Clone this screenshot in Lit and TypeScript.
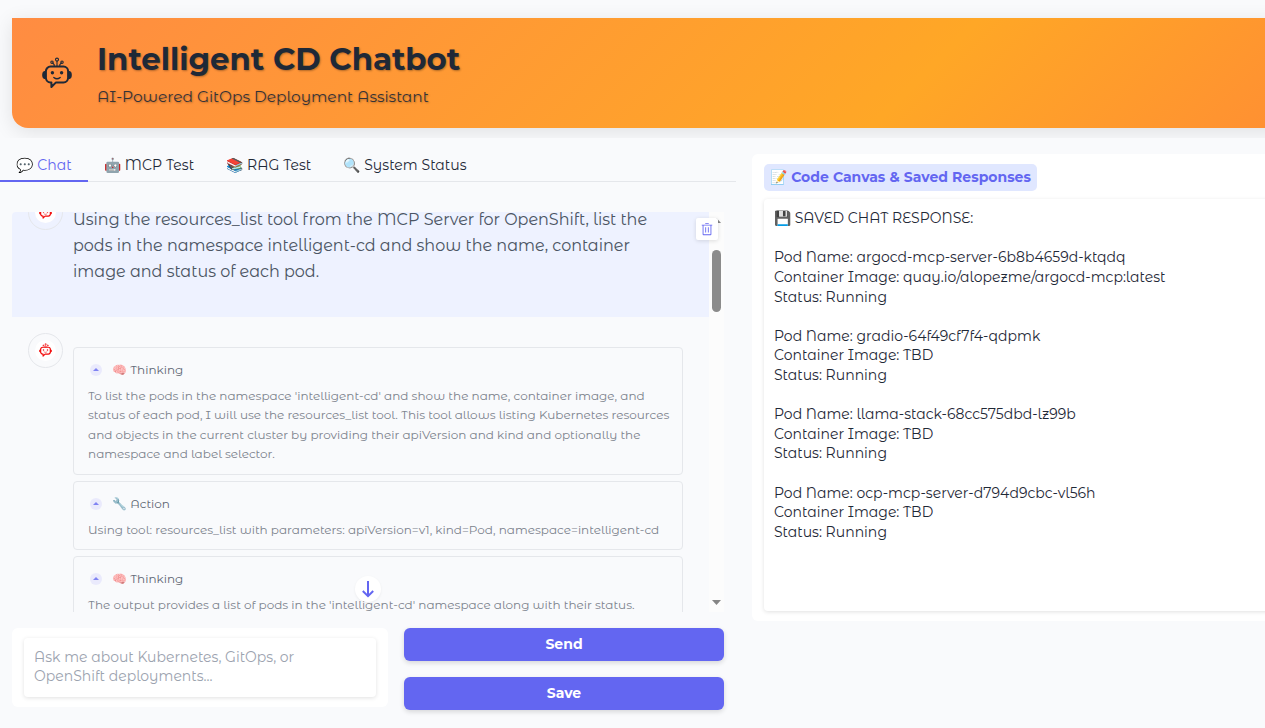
import { LitElement, html, css, svg } from "lit";
import { customElement } from "lit/decorators.js";

const robot = (cls: string) => html`
  <svg class=${cls} viewBox="0 0 30 32" fill="none" stroke="currentColor"
    stroke-linecap="round" stroke-linejoin="round">
    ${svg`
      <path d="M8.500 9.600h13a4.600 4.600 0 0 1 4.600 4.600v6.600a4.600 4.600 0 0 1-4.600 4.600h-7.500l-4.600 4.600v-4.600h-.900a4.600 4.600 0 0 1-4.600-4.600v-6.600a4.600 4.600 0 0 1 4.600-4.600z"/>
      <path d="M15 9.400V4.200M12.200 9.400V7.600L10.600 6M17.800 9.400V7.600L19.400 6" stroke-width="1.100"/>
      <circle cx="15" cy="2.600" r="1.500" stroke-width="1.100"/>
      <circle cx="10" cy="5.200" r="1.200" stroke-width="1.100"/>
      <circle cx="20" cy="5.200" r="1.200" stroke-width="1.100"/>
      <path d="M2.600 14.800C.300 15.400.300 20.800 2.600 21.400zM27.400 14.800c2.300.600 2.300 6 0 6.600z" fill="currentColor" stroke-width="1.400"/>
      <circle cx="10.400" cy="15.800" r="1.700" fill="currentColor" stroke="none"/>
      <circle cx="19.600" cy="15.800" r="1.700" fill="currentColor" stroke="none"/>
      <path d="M11.800 20.400c1.800 1.500 4.600 1.500 6.400 0" stroke-width="1.300"/>`}
  </svg>`;

const TABS = ["💬 Chat", "🤖 MCP Test", "📚 RAG Test", "🔍 System Status"];

const STEPS = [
  {
    title: "🧠 Thinking",
    body: "To list the pods in the namespace 'intelligent-cd' and show the name, container image, and status of each pod, I will use the resources_list tool. This tool allows listing Kubernetes resources and objects in the current cluster by providing their apiVersion and kind and optionally the namespace and label selector.",
  },
  {
    title: "🔧 Action",
    body: "Using tool: resources_list with parameters: apiVersion=v1, kind=Pod, namespace=intelligent-cd",
  },
  {
    title: "🧠 Thinking",
    body: "The output provides a list of pods in the 'intelligent-cd' namespace along with their status.",
  },
];

const SAVED = `💾 SAVED CHAT RESPONSE:

Pod Name: argocd-mcp-server-6b8b4659d-ktqdq
Container Image: quay.io/alopezme/argocd-mcp:latest
Status: Running

Pod Name: gradio-64f49cf7f4-qdpmk
Container Image: TBD
Status: Running

Pod Name: llama-stack-68cc575dbd-lz99b
Container Image: TBD
Status: Running

Pod Name: ocp-mcp-server-d794d9cbc-vl56h
Container Image: TBD
Status: Running`;

@customElement("app-root")
class AppRoot extends LitElement {
  static styles = css`
    :host {
      display: block; height: 728px; overflow: hidden; background: #f9fafc; color: #1f2937;
      font-family: "Montserrat Alternates", Montserrat, Inter, sans-serif; font-size: 14px;
    }
    * { box-sizing: border-box; }
    .top { padding: 18px 0 10px 12px; overflow: hidden; height: 138px; }
    .hero {
      display: flex; align-items: center; width: 1828px; height: 110px; padding-left: 30px;
      border-radius: 0 0 16px 16px; box-shadow: 0 4px 20px rgba(0, 0, 0, .1);
      background: linear-gradient(135deg, #ff8c42 0%, #ffa726 50%, #ff7043 100%);
    }
    .logo { width: 30px; height: 32px; margin-right: 25px; stroke-width: 2; }
    .title { font-family: Montserrat, sans-serif; font-weight: 700; font-size: 30.8px; line-height: 40px; text-shadow: 1px 1px 2px rgba(0,0,0,.3); white-space: nowrap; }
    .sub { font-size: 15.4px; line-height: 20px; margin-top: 8px; opacity: .9; text-shadow: 1px 1px 2px rgba(0,0,0,.3); }
    .cols { display: flex; gap: 16px; }
    .left { width: 736px; flex: none; }
    .tabs { display: flex; height: 44px; padding-top: 10px; box-shadow: inset 0 -1px #e5e7eb; }
    .tab { display: flex; align-items: center; padding: 0 16px; height: 34px; white-space: nowrap; word-spacing: .3px; }
    .tab.on { color: #6366f1; box-shadow: inset 0 -2px #6366f1; word-spacing: .6px; }
    .chat { position: relative; display: flex; margin: 30px 12px 0; height: 400px; overflow: hidden; }
    .msgs { width: 697px; }
    .user { display: flex; gap: 10px; height: 105px; background: #eef2ff; padding-left: 16px; border-radius: 4px 0 0 0; }
    .user .avatar { margin-top: -17px; }
    .avatar {
      width: 35px; height: 35px; flex: none; border-radius: 50%; border: 1px solid #e5e7eb; color: #f20808;
      display: grid; place-items: center;
    }
    .disc { width: 21px; height: 21px; border-radius: 50%; background: #fff; display: grid; place-items: center; }
    .mini { width: 13px; height: 14px; margin-bottom: 1px; stroke-width: 2.6; }
    .said { width: 600px; font-size: 16px; letter-spacing: -.01px; line-height: 26px; color: #4b5563; margin-top: -5px; }
    .bot { display: flex; gap: 10px; padding: 16px 0 0 16px; }
    .steps { display: flex; flex-direction: column; gap: 6.3px; margin-top: 14.1px; width: 610px; }
    .step { border: 1px solid #e5e7eb; border-radius: 4px; padding: 12px 11px 9.8px 14px; }
    .head { display: flex; align-items: center; height: 19.6px; color: #374151; opacity: .8; font-size: 12px; }
    .dot { width: 12px; height: 12px; margin: 0 10px 0 2px; border-radius: 50%; background: #e7e7fc; display: grid; place-items: center; }
    .dot svg { width: 6px; height: 3px; fill: #6366f1; }
    .body { margin-top: 6.1px; font-size: 12px; line-height: 19.5px; color: #7c828c; }
    .track { position: relative; width: 15px; background: #fcfcfc; }
    .track svg { position: absolute; left: 3px; width: 9px; height: 5px; fill: #858585; }
    .up { top: 6px; }
    .down { bottom: 7px; }
    .thumb { position: absolute; left: 3px; top: 38px; width: 9px; height: 62px; border-radius: 5px; background: #8b8b8b; }
    .trash {
      position: absolute; left: 684px; top: 6px; width: 22px; height: 22px; background: #fff; border-radius: 2px;
      display: grid; place-items: center; box-shadow: 0 1px 4px rgba(0,0,0,.13);
    }
    .trash svg { width: 14px; height: 14px; fill: #6366f1; }
    .jump {
      position: absolute; left: 343px; top: 364px; width: 26px; height: 26px; background: #fff; border-radius: 50%;
      display: grid; place-items: center; box-shadow: 0 1px 3px rgba(0,0,0,.06);
    }
    .jump svg { width: 14px; height: 18px; }
    .compose { display: flex; gap: 16px; margin: 16px 12px 0; align-items: flex-start; }
    .ask { width: 376px; height: 79px; background: #fff; border-radius: 6px; padding: 10px 12px; }
    .area { height: 59px; border-radius: 4px; padding: 9.7px 10px; line-height: 19.6px; color: #9ca3af; box-shadow: 0 1px 4px rgba(0,0,0,.12); }
    .btns { display: flex; flex-direction: column; gap: 16px; width: 320px; }
    .btn {
      height: 33px; padding-bottom: 1px; border-radius: 6px; background: #6366f1; color: #fff; display: grid; place-items: center;
      font-family: Montserrat, sans-serif; font-weight: 700; font-size: 14px; box-shadow: 0 2px 5px rgba(0,0,0,.14);
    }
    .canvas { width: 1076px; flex: none; height: 467px; margin-top: 16px; padding: 10px 12px; background: #fff; border-radius: 6px; }
    .label {
      display: flex; align-items: center; width: 273px; height: 27px; padding: 0 0 1px 6px; border-radius: 5px; background: #e0e7ff; color: #6366f1;
      font-family: Montserrat, sans-serif; font-weight: 700; white-space: nowrap; word-spacing: .2px;
    }
    .saved { height: 412px; margin-top: 8px; padding: 10.2px 10px; border-radius: 4px; line-height: 19.6px; white-space: pre; box-shadow: 0 1px 4px rgba(0,0,0,.12); }
  `;

  render() {
    return html`
      <div class="top">
        <div class="hero">
          ${robot("logo")}
          <div>
            <div class="title">Intelligent CD Chatbot</div>
            <div class="sub">AI-Powered GitOps Deployment Assistant</div>
          </div>
        </div>
      </div>
      <div class="cols">
        <div class="left">
          <div class="tabs">
            ${TABS.map((t, i) => html`<div class="tab ${i === 0 ? "on" : ""}">${t}</div>`)}
          </div>
          <div class="chat">
            <div class="msgs">
              <div class="user">
                <div class="avatar"><div class="disc">${robot("mini")}</div></div>
                <div class="said">Using the resources_list tool from the MCP Server for OpenShift, list the pods in the namespace intelligent-cd and show the name, container image and status of each pod.</div>
              </div>
              <div class="bot">
                <div class="avatar"><div class="disc">${robot("mini")}</div></div>
                <div class="steps">
                  ${STEPS.map((s) => html`
                    <div class="step">
                      <div class="head">
                        <span class="dot"><svg viewBox="0 0 8 4"><path d="M0 4 4 0l4 4z" /></svg></span>
                        <span>${s.title}</span>
                      </div>
                      <div class="body">${s.body}</div>
                    </div>`)}
                </div>
              </div>
            </div>
            <div class="track">
              <svg class="up" viewBox="0 0 9 5"><path d="M0 5 4.500 0 9 5z" /></svg>
              <div class="thumb"></div>
              <svg class="down" viewBox="0 0 9 5"><path d="M0 0h9L4.500 5z" /></svg>
            </div>
            <div class="trash">
              <svg viewBox="0 0 32 32">
                <path d="M12 12h2v12h-2zM18 12h2v12h-2zM4 6v2h2v20a2 2 0 0 0 2 2h16a2 2 0 0 0 2-2V8h2V6zM8 28V8h16v20zM12 2h8v2h-8z" />
              </svg>
            </div>
            <div class="jump">
              <svg viewBox="0 0 14 18" fill="none" stroke="#6366f1" stroke-width="2"><path d="M7 1v15M1.800 11 7 16.200 12.200 11" /></svg>
            </div>
          </div>
          <div class="compose">
            <div class="ask"><div class="area">Ask me about Kubernetes, GitOps, or OpenShift deployments...</div></div>
            <div class="btns">
              <div class="btn">Send</div>
              <div class="btn">Save</div>
            </div>
          </div>
        </div>
        <div class="canvas">
          <div class="label">📝 Code Canvas &amp; Saved Responses</div>
          <div class="saved">${SAVED}</div>
        </div>
      </div>
    `;
  }
}
